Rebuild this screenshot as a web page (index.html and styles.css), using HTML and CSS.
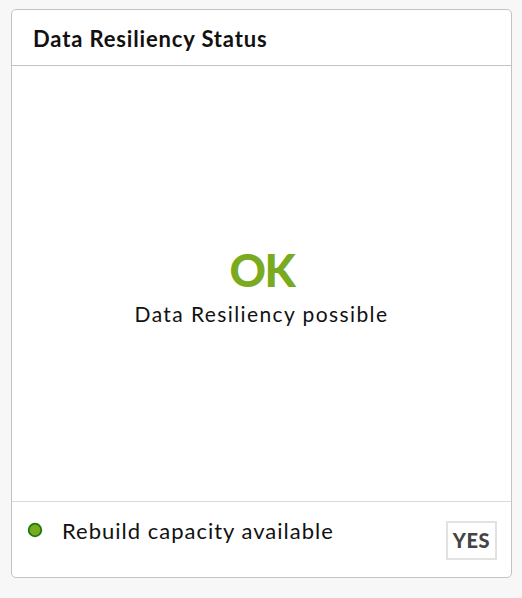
FILE: index.html
```html
<!DOCTYPE html>
<html>
<head>
<meta charset="utf-8">
<link rel="stylesheet" href="styles.css">
</head>
<body>
<div class="card">
  <div class="card-header">Data Resiliency Status</div>
  <div class="card-body">
    <div class="status">OK</div>
    <div class="status-text">Data Resiliency possible</div>
  </div>
  <div class="card-footer">
    <svg class="dot" width="16" height="16" viewBox="0 0 16 16"><circle cx="8" cy="8" r="6.3" fill="#7aaa1f" stroke="#1f7a0f" stroke-width="1.8"/></svg>
    <span class="footer-label">Rebuild capacity available</span>
    <span class="badge">YES</span>
  </div>
</div>
</body>
</html>
```
FILE: styles.css
```css
html, body {
  margin: 0;
  padding: 0;
  background: #f7f7f7;
}
body {
  font-family: "Lato", "Noto Sans", sans-serif;
  color: #111;
  padding: 9px 10px 0 11px;
}
.card {
  width: 499px;
  height: 567px;
  background: #fff;
  border: 1px solid #c1c4c6;
  border-radius: 5px;
  display: flex;
  flex-direction: column;
}
.card-header {
  height: 56px;
  border-bottom: 1px solid #c1c4c6;
  display: flex;
  align-items: center;
  padding-left: 21px;
  font-size: 22px;
  font-weight: 700;
  letter-spacing: 0.85px;
  box-sizing: border-box;
  padding-top: 2px;
}
.card-body {
  flex: 1;
  display: flex;
  flex-direction: column;
  align-items: center;
  justify-content: center;
  border-bottom: 1px solid #dadada;
  padding-top: 6px;
}
.status {
  color: #7aab1f;
  font-size: 45px;
  font-weight: 900;
  line-height: 46px;
  letter-spacing: -1.5px;
  padding-left: 1px;
}
.status-text {
  font-size: 21px;
  letter-spacing: 1.4px;
  margin-top: 8px;
}
.card-footer {
  height: 75px;
  display: flex;
  align-items: flex-start;
  padding: 18px 14px 0 15px;
  box-sizing: border-box;
}
.dot {
  margin-top: 2px;
}
.footer-label {
  font-size: 22px;
  letter-spacing: 1px;
  margin-left: 19px;
  line-height: 28px;
  margin-top: -3px;
}
.badge {
  margin-left: auto;
  margin-top: 1px;
  border: 2px solid #e2e2e2;
  color: #444;
  font-weight: 900;
  font-size: 20px;
  letter-spacing: 0.5px;
  padding: 7px 5px;
  line-height: 21px;
}
```
